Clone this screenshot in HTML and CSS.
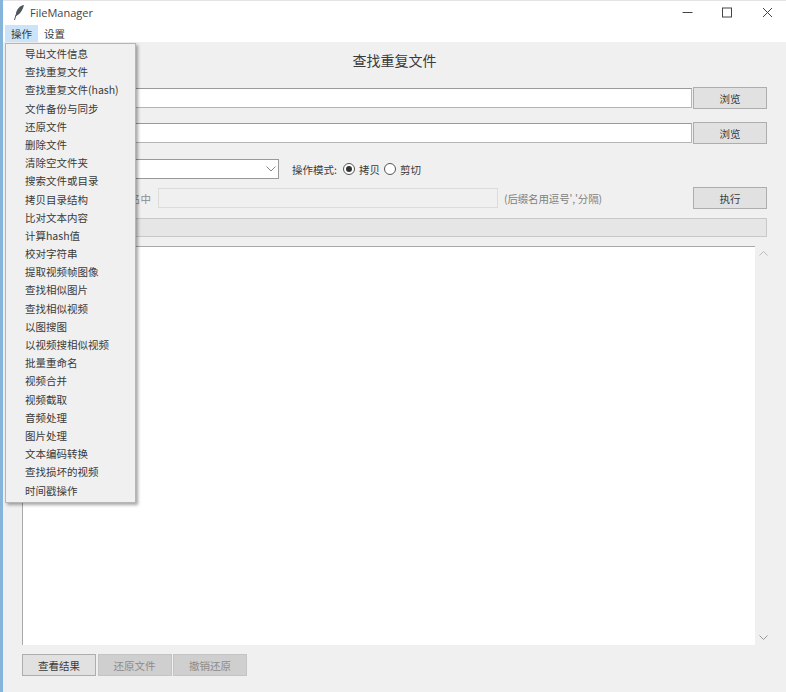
FILE: index.html
```html
<!DOCTYPE html>
<html lang="zh-CN">
<head>
  <meta charset="UTF-8" />
  <title>FileManager</title>
  <link rel="stylesheet" href="styles.css">
</head>
<body>
  <div class="desk-edge"></div>
  <div class="window">
    <div class="titlebar">
      <svg class="app-icon" width="12" height="17" viewBox="0 0 12 17">
        <path d="M11 1C7 1.500 3.500 5 2.800 10.500L2.500 12.500L4.800 11C8 9 10 5 11 1Z" fill="#50565d"/>
        <path d="M3 11L1.500 16" stroke="#50565d" stroke-width="1" fill="none"/>
      </svg>
      <span class="app-name">FileManager</span>
      <div class="win-controls">
        <svg width="11" height="11" viewBox="0 0 11 11"><path d="M0.500 5.500H10.500" stroke="#444" fill="none"/></svg>
        <svg width="11" height="11" viewBox="0 0 11 11"><rect x="0.500" y="1" width="9" height="9" stroke="#444" fill="none"/></svg>
        <svg width="11" height="11" viewBox="0 0 11 11"><path d="M1 1L10 10M10 1L1 10" stroke="#444" fill="none"/></svg>
      </div>
    </div>

    <div class="menubar">
      <span class="menu-top active">操作</span>
      <span class="menu-top">设置</span>
    </div>

    <!-- dropdown of the 操作 menu -->
    <ul class="dropdown">
      <li>导出文件信息</li>
      <li>查找重复文件</li>
      <li>查找重复文件(hash)</li>
      <li>文件备份与同步</li>
      <li>还原文件</li>
      <li>删除文件</li>
      <li>清除空文件夹</li>
      <li>搜索文件或目录</li>
      <li>拷贝目录结构</li>
      <li>比对文本内容</li>
      <li>计算hash值</li>
      <li>校对字符串</li>
      <li>提取视频帧图像</li>
      <li>查找相似图片</li>
      <li>查找相似视频</li>
      <li>以图搜图</li>
      <li>以视频搜相似视频</li>
      <li>批量重命名</li>
      <li>视频合并</li>
      <li>视频截取</li>
      <li>音频处理</li>
      <li>图片处理</li>
      <li>文本编码转换</li>
      <li>查找损坏的视频</li>
      <li>时间戳操作</li>
    </ul>

    <div class="content">
      <h1 class="page-title">查找重复文件</h1>

      <div class="path-row first">
        <input class="path-input" type="text">
        <button class="btn">浏览</button>
      </div>
      <div class="path-row second">
        <input class="path-input" type="text">
        <button class="btn">浏览</button>
      </div>

      <div class="mode-row">
        <div class="combo">
          <svg width="10" height="6" viewBox="0 0 10 6"><path d="M0.500 0.500L5 5L9.500 0.500" stroke="#888" fill="none"/></svg>
        </div>
        <span class="mode-label">操作模式:</span>
        <span class="radio checked"></span>
        <span class="radio-text">拷贝</span>
        <span class="radio"></span>
        <span class="radio-text">剪切</span>
      </div>

      <div class="filter-row">
        <span class="filter-label">名中</span>
        <div class="filter-input"></div>
        <span class="filter-hint">(后缀名用逗号','分隔)</span>
        <button class="btn run">执行</button>
      </div>

      <div class="progress"></div>

      <div class="output-wrap">
        <div class="output"></div>
        <div class="scrollbar">
          <svg width="9" height="5" viewBox="0 0 9 5"><path d="M0.500 4.500L4.500 0.500L8.500 4.500" stroke="#bbb" fill="none"/></svg>
          <svg width="9" height="5" viewBox="0 0 9 5"><path d="M0.500 0.500L4.500 4.500L8.500 0.500" stroke="#999" fill="none"/></svg>
        </div>
      </div>

      <div class="bottom-row">
        <button class="btn wide">查看结果</button>
        <button class="btn wide" disabled>还原文件</button>
        <button class="btn wide" disabled>撤销还原</button>
      </div>
    </div>
  </div>
</body>
</html>
```

FILE: styles.css
```css
* {
  box-sizing: border-box;
}
html, body {
  height: 100%;
}
body {
  margin: 0;
  display: flex;
  overflow: hidden;
  background: #f0f0f0;
  color: #3a3a3a;
  font-family: "Noto Sans CJK SC", "Liberation Sans", sans-serif;
  font-size: 10.5px;
}
.desk-edge {
  width: 3px;
  background: #86b5dc;
}
.window {
  flex: 1;
  position: relative;
  display: flex;
  flex-direction: column;
}

.titlebar {
  height: 25px;
  flex: none;
  display: flex;
  align-items: center;
  background: #fff;
  border-top: 1px solid #e4e4e4;
  padding: 0 0 2px 10px;
}
.app-name {
  margin-left: 5px;
  font-size: 11px;
  font-family: "Open Sans", "Noto Sans CJK SC", sans-serif;
  color: #444;
}
.win-controls {
  margin-left: auto;
  display: flex;
  gap: 29px;
  padding-right: 13px;
}

.menubar {
  height: 17px;
  flex: none;
  display: flex;
  background: #fff;
  padding-left: 2px;
}
.menu-top {
  width: 33px;
  line-height: 17px;
  text-align: center;
}
.menu-top.active {
  background: #cce4f7;
}

.dropdown {
  position: absolute;
  left: 2px;
  top: 43px;
  width: 131px;
  height: 460px;
  margin: 0;
  padding: 1px 0 0 19px;
  list-style: none;
  background: #f0f0f0;
  border: 1px solid #b5b5b5;
  box-shadow: 2px 2px 3px rgba(0,0,0,0.35);
  z-index: 5;
}
.dropdown li {
  height: 18.2px;
  line-height: 18.2px;
  white-space: nowrap;
}

.content {
  flex: 1;
  padding: 0 19px;
  display: flex;
  flex-direction: column;
}
.page-title {
  margin: 9px 0 0;
  height: 18px;
  line-height: 18px;
  text-align: center;
  font-size: 14px;
  font-weight: normal;
}

.btn {
  height: 22px;
  width: 74px;
  padding: 0;
  background: #e1e1e1;
  border: 1px solid #adadad;
  font: inherit;
  color: #3a3a3a;
}
.btn:disabled {
  background: #cfcfcf;
  border-color: #c4c4c4;
  color: #8c8c8c;
}

.path-row {
  display: flex;
  align-items: center;
  gap: 1px;
}
.path-row.first {
  margin-top: 18px;
}
.path-row.second {
  margin-top: 13px;
}
.path-input {
  flex: 1;
  height: 20px;
  background: #fff;
  border: 1px solid #b4b4b4;
  border-top-color: #999;
}

.mode-row {
  margin-top: 15px;
  height: 20px;
  display: flex;
  align-items: center;
}
.combo {
  width: 257px;
  height: 20px;
  display: flex;
  align-items: center;
  justify-content: flex-end;
  padding-right: 2px;
  background: #fff;
  border: 1px solid #999;
}
.mode-label {
  margin-left: 13px;
  margin-right: 6px;
}
.radio {
  width: 12px;
  height: 12px;
  border: 1px solid #555;
  border-radius: 50%;
  background: #fff;
  display: flex;
  align-items: center;
  justify-content: center;
}
.radio.checked::after {
  content: "";
  width: 6px;
  height: 6px;
  border-radius: 50%;
  background: #333;
}
.radio-text {
  margin-left: 4px;
  margin-right: 4px;
}

.filter-row {
  margin-top: 8px;
  height: 22px;
  display: flex;
  align-items: center;
}
.filter-label {
  margin-left: 108px;
  width: 28px;
  color: #8c8c8c;
}
.filter-input {
  width: 340px;
  height: 20px;
  background: #f0f0f0;
  border: 1px solid #dcdcdc;
}
.filter-hint {
  margin-left: 6px;
  color: #808080;
  letter-spacing: -0.15px;
}
.btn.run {
  margin-left: auto;
}

.progress {
  margin-top: 9px;
  height: 19px;
  flex: none;
  background: #e6e6e6;
  border: 1px solid #c8c8c8;
}

.output-wrap {
  margin-top: 9px;
  height: 399px;
  flex: none;
  display: flex;
  margin-right: -5px;
}
.output {
  flex: 1;
  background: #fff;
  border-top: 1px solid #a8a8a8;
  border-left: 1px solid #a8a8a8;
}
.scrollbar {
  width: 17px;
  display: flex;
  flex-direction: column;
  justify-content: space-between;
  align-items: center;
  padding: 5px 0;
  background: #f0f0f0;
}

.bottom-row {
  margin-top: 9px;
  display: flex;
  gap: 1.5px;
}
```
